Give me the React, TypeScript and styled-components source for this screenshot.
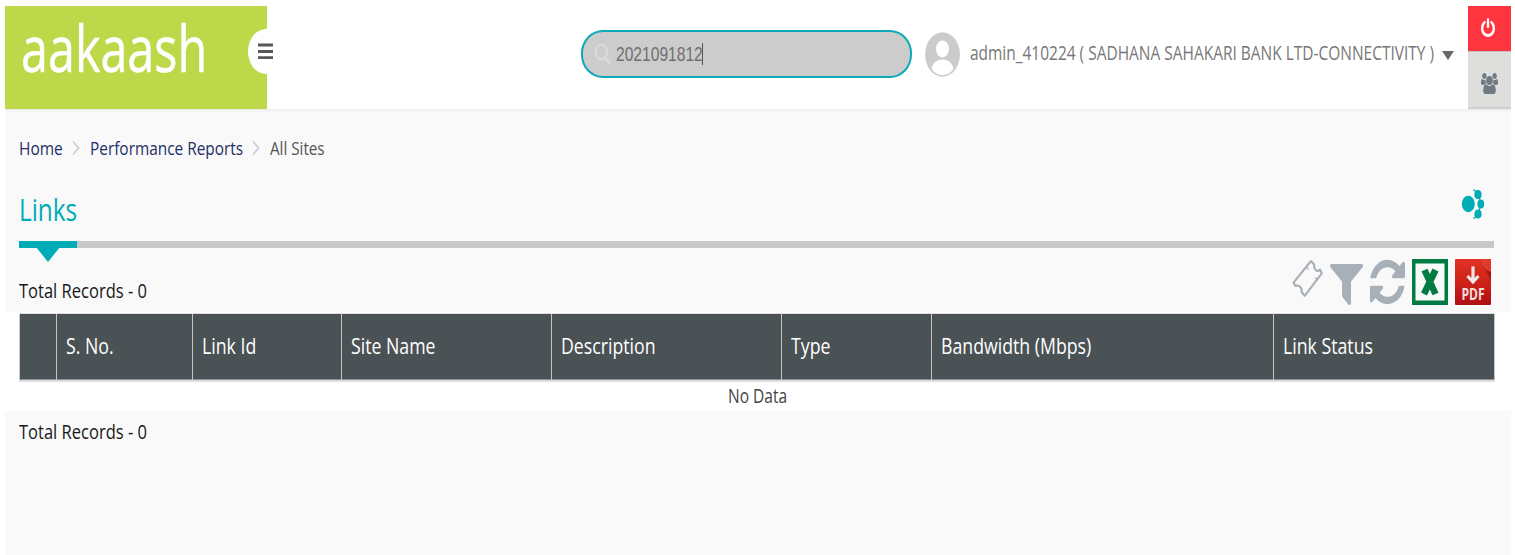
import React from 'react';
import styled, { createGlobalStyle } from 'styled-components';

const GlobalStyle = createGlobalStyle`
  * { box-sizing: border-box; }
  body {
    margin: 0;
    background: #fff;
    font-family: 'Open Sans', 'Noto Sans', sans-serif;
    overflow: hidden;
  }
`;

/* Condensed text run: glyphs are narrowed while the run keeps its drawn width. */
const Condensed = styled.span<{ $scale: number; $width?: number }>`
  display: block;
  flex: none;
  width: ${p => (p.$width ? `${p.$width}px` : 'auto')};
  white-space: nowrap;
  transform: scaleX(${p => p.$scale});
  transform-origin: 0 50%;
`;

const Page = styled.div`
  display: flex;
  flex-direction: column;
  height: 555px;
  padding: 6px 4px 0 5px;
`;

const Header = styled.header`
  display: flex;
  height: 103px;
  flex: none;
  background: #fff;
`;

const Brand = styled.div`
  width: 262px;
  height: 103px;
  padding-left: 16px;
  background: #bdd849;
`;

const BrandName = styled(Condensed)`
  height: 84px;
  line-height: 84px;
  font-size: 64px;
  color: #fff;
  -webkit-text-stroke: 0.5px #fff;
`;

/* White disc straddling the brand edge; only its left half shows against the green. */
const MenuButton = styled.div`
  display: flex;
  align-items: center;
  flex: none;
  width: 36px;
  height: 45px;
  margin: 23px 0 0 -19px;
  padding-left: 10px;
  border-radius: 50%;
  background: #fff;
`;

const SearchBox = styled.div`
  display: flex;
  align-items: center;
  width: 331px;
  height: 48px;
  margin: 24px 0 0 297px;
  padding-left: 11px;
  border: 2px solid #0caab8;
  border-radius: 22px / 23px;
  background: #ccc;
`;

const SearchText = styled(Condensed)`
  margin-left: 4px;
  font: 20px/24px 'Liberation Sans', Arial, sans-serif;
  color: #707070;
`;

const Caret = styled.i`
  width: 1px;
  height: 22px;
  background: #555;
`;

const Account = styled.div`
  display: flex;
  align-items: center;
  height: 96px;
  margin-left: 13px;
`;

const AccountName = styled(Condensed)`
  margin: -2px 0 0 10px;
  font-size: 19.5px;
  line-height: 28px;
  color: #777;
`;

const DropArrow = styled.i`
  margin-left: 7px;
  margin-top: 3px;
  border: solid transparent;
  border-width: 9px 6.5px 0;
  border-top-color: #686868;
`;

const SideButtons = styled.div`
  width: 43px;
  margin-left: auto;
`;

const SideButton = styled.div<{ $tone: 'danger' | 'plain' }>`
  display: flex;
  justify-content: center;
  height: ${p => (p.$tone === 'danger' ? 45 : 58)}px;
  padding-top: ${p => (p.$tone === 'danger' ? 12 : 22)}px;
  padding-right: ${p => (p.$tone === 'danger' ? 4 : 0)}px;
  background: ${p => (p.$tone === 'danger' ? '#ff3640' : '#dededc')};
  border-bottom: ${p => (p.$tone === 'danger' ? '0' : '2px solid #d0d0cf')};
  box-shadow: ${p => (p.$tone === 'danger' ? 'none' : 'inset 0 1px 0 #c8bfbe')};
`;

const Content = styled.main`
  flex: 1;
  background: #f9f9f9;
  border-top: 1px solid #ececec;
  box-shadow: inset 0 2px 0 #f5f5f5;
`;

const Breadcrumb = styled.nav`
  display: flex;
  align-items: center;
  height: 77px;
  padding: 0 0 1px 13.5px;
`;

const Crumb = styled(Condensed)<{ $current?: boolean }>`
  font-size: 19px;
  line-height: 28px;
  color: ${p => (p.$current ? '#555' : '#1d2f66')};
`;

const Separator = styled.svg`
  width: 8px;
  height: 16px;
  margin: 0 10px;
`;

const TitleRow = styled.div`
  display: flex;
  justify-content: space-between;
  height: 54px;
  padding: 0 26px 0 13.5px;
`;

const Title = styled(Condensed)`
  font-size: 31px;
  line-height: 45px;
  color: #00acb5;
`;

const Rule = styled.div`
  height: 7px;
  margin: 0 17px 0 14px;
  background: #c8c8c8;
`;

const ActiveMark = styled.div`
  display: flex;
  justify-content: center;
  width: 58px;
  height: 7px;
  background: #00acb5;
`;

const Pointer = styled.i`
  width: 0;
  height: 0;
  margin-top: 6px;
  border: solid transparent;
  border-width: 15px 12px 0;
  border-top-color: #00acb5;
`;

const Toolbar = styled.div`
  display: flex;
  justify-content: space-between;
  height: 64px;
  padding: 11px 20px 0 14px;
`;

const Total = styled(Condensed)`
  font-size: 20px;
  line-height: 30px;
  color: #181818;
`;

const ToolbarTotal = styled(Total)`
  margin-top: 17px;
`;

const Actions = styled.div`
  display: flex;
  gap: 7px;
`;

const TableBand = styled.section`
  height: 99px;
  padding: 1px 16px 0 14px;
  background: #fff;
`;

const HeadRow = styled.div`
  display: grid;
  grid-template-columns: 37px 136px 149px 210px 230px 150px 342px 222px;
  height: 69px;
  background: #4a5255;
  border: solid #dedede;
  border-width: 1px 0 2px;
  box-shadow: inset 0 -1px 0 #8b9091;
`;

const HeadCell = styled.div`
  display: flex;
  align-items: center;
  height: 66px;
  padding-left: 9px;
  border-left: 1px solid #c4c6c7;
  &:last-child { border-right: 1px solid #c4c6c7; }
`;

const HeadText = styled(Condensed)`
  margin-top: -5px;
  font-size: 22px;
  line-height: 30px;
  color: #fff;
`;

const EmptyRow = styled.div`
  padding-left: 708.5px;
`;

const EmptyText = styled(Condensed)`
  font-size: 19.5px;
  line-height: 28px;
  color: #444;
`;

const Footer = styled.footer`
  padding: 6px 0 0 14px;
`;

const COLUMNS = ['', 'S. No.', 'Link Id', 'Site Name', 'Description', 'Type', 'Bandwidth (Mbps)', 'Link Status'];

const Chevron = () => (
  <Separator viewBox="0 0 8 16">
    <path d="M1 1.5 6.6 8 1 14.5" fill="none" stroke="#cfcfcf" strokeWidth="1.8" />
  </Separator>
);

const BurgerIcon = () => (
  <svg width="15" height="17" viewBox="0 0 15 17">
    <path d="M0 2h15M0 8.5h15M0 14.7h15" stroke="#585858" strokeWidth="2.8" />
  </svg>
);

const SearchIcon = () => (
  <svg width="18" height="22" viewBox="0 0 18 22">
    <ellipse cx="7.5" cy="9" rx="5.8" ry="7.4" fill="none" stroke="#dadada" strokeWidth="2.2" />
    <path d="m11.5 15 4 5" stroke="#dadada" strokeWidth="2.8" strokeLinecap="round" />
  </svg>
);

const AvatarIcon = () => (
  <svg width="35" height="45" viewBox="0 0 35 45">
    <ellipse cx="17.5" cy="22.5" rx="17.4" ry="22.2" fill="#cbcbcb" />
    <ellipse cx="17.5" cy="17" rx="6.5" ry="8.5" fill="#fff" />
    <path d="M6.5 36.5C8 30.5 12 27.5 17.5 27.5S27 30.5 28.5 36.5C26 41 22 43.2 17.5 43.2S9 41 6.5 36.5Z" fill="#fff" />
  </svg>
);

const PowerIcon = () => (
  <svg width="14" height="19" viewBox="128 0 1536 1664" preserveAspectRatio="none">
    <path fill="#fff" d="M1664 896q0 156-61 298t-164 245-245 164-298 61-298-61-245-164-164-245-61-298q0-182 80.5-343t226.5-270q43-32 95.5-25t83.5 50q32 42 24.5 94.5t-49.5 84.5q-98 74-151.5 181t-53.5 228q0 104 40.5 198.5t109.5 163.5 163.5 109.5 198.5 40.5 198.5-40.5 163.5-109.5 109.5-163.5 40.5-198.5q0-121-53.5-228t-151.5-181q-42-32-49.5-84.5t24.5-94.5q31-43 84-50t95 25q146 109 226.5 270t80.5 343zm-640-768v640q0 52-38 90t-90 38-90-38-38-90v-640q0-52 38-90t90-38 90 38 38 90z" />
  </svg>
);

const UsersIcon = () => (
  <svg width="17" height="21" viewBox="64 0 1920 1792" preserveAspectRatio="none">
    <path fill="#6f7a83" d="M657 896q-162 5-265 128h-134q-82 0-138-40.5t-56-118.5q0-353 124-353 6 0 43.5 21t97.5 42.5 119 21.5q67 0 133-23-5 37-5 66 0 139 81 256zm1071 637q0 120-73 189.5t-194 69.5h-874q-121 0-194-69.5t-73-189.5q0-53 3.5-103.5t14-109 26.5-108.5 43-97.5 62-81 85.5-53.5 111.5-20q10 0 43 21.5t73 48 107 48 135 21.5 135-21.5 107-48 73-48 43-21.5q61 0 111.5 20t85.5 53.5 62 81 43 97.5 26.5 108.5 14 109 3.5 103.5zm-1024-1277q0 106-75 181t-181 75-181-75-75-181 75-181 181-75 181 75 75 181zm704 384q0 159-112.5 271.5t-271.5 112.5-271.5-112.5-112.5-271.5 112.5-271.5 271.5-112.5 271.5 112.5 112.5 271.5zm576 225q0 78-56 118.5t-138 40.5h-134q-103-123-265-128 81-117 81-256 0-29-5-66 66 23 133 23 59 0 119-21.5t97.5-42.5 43.5-21q124 0 124 353zm-128-609q0 106-75 181t-181 75-181-75-75-181 75-181 181-75 181 75 75 181z" />
  </svg>
);

const NetworkSvg = styled.svg`
  width: 24px;
  height: 31px;
  margin-top: 2px;
`;

const NetworkIcon = () => (
  <NetworkSvg viewBox="0 0 24 31">
    <g fill="#00acb5">
      <ellipse cx="7.3" cy="15" rx="6.5" ry="8.2" />
      <ellipse cx="17" cy="5.5" rx="3.6" ry="4.5" />
      <ellipse cx="19.8" cy="15" rx="3.4" ry="4.6" />
      <ellipse cx="17" cy="25" rx="3.6" ry="4.5" />
    </g>
    <path d="M12.3.6C21 5 21.5 24 12.3 29.8" fill="none" stroke="#00acb5" strokeWidth="1.3" />
  </NetworkSvg>
);

const TicketIcon = () => (
  <svg width="31" height="46" viewBox="0 0 31 46">
    <path d="M19 2 22.2 5.5Q21.5 9.5 24.3 11.5Q26.5 12.7 28 10.7L29.8 14.3 12.6 36.9 9.6 32.8Q10 29 7.5 27.2Q5.3 26 3.5 27L1.5 23.6Z" fill="none" stroke="#a7afb8" strokeWidth="2.1" strokeLinejoin="round" />
    <path d="m15 8.5 1.5 2.2M23.3 18.3l1.6 2.4" stroke="#a7afb8" strokeWidth="1.3" />
  </svg>
);

const FilterSvg = styled.svg`
  width: 33px;
  height: 41px;
  margin-top: 5px;
`;

const FilterIcon = () => (
  <FilterSvg viewBox="0 0 1408 1408" preserveAspectRatio="none">
    <path fill="#a7afb8" d="M1403 39q17 41-14 70l-493 493v742q0 42-39 59-13 5-25 5-27 0-45-19l-256-256q-19-19-19-45v-486l-493-493q-31-29-14-70 17-39 59-39h1280q42 0 59 39z" />
  </FilterSvg>
);

const RefreshIcon = () => (
  <svg width="35" height="46" viewBox="0 -30 1536 1596" preserveAspectRatio="none">
    <path fill="#a7afb8" d="M1511 928q0 5-1 7-64 268-268 434.5t-478 166.5q-146 0-282.5-55t-243.5-157l-129 129q-19 19-45 19t-45-19-19-45v-448q0-26 19-45t45-19h448q26 0 45 19t19 45-19 45l-137 137q71 66 161 102t187 36q134 0 250-65t186-179q11-17 53-117 8-23 30-23h192q13 0 22.5 9.5t9.5 22.5zm25-800v448q0 26-19 45t-45 19h-448q-26 0-45-19t-19-45 19-45l138-138q-148-137-349-137-134 0-250 65t-186 179q-11 17-53 117-8 23-30 23h-199q-13 0-22.5-9.5t-9.5-22.5v-7q65-268 270-434.5t480-166.5q146 0 284 55.5t245 156.5l130-129q19-19 45-19t45 19 19 45z" />
  </svg>
);

const ExcelIcon = () => (
  <svg width="36" height="46" viewBox="0 0 36 46">
    <path fill="#007b43" d="M0 0h36v46H0z" />
    <path fill="#f7faf8" d="M3.5 4.5h29v37h-29z" />
    <path d="M12.5 11 23.5 35M23.5 11 12 35" stroke="#007b43" strokeWidth="6.6" />
  </svg>
);

const PdfText = styled.text`
  font: 700 15.5px 'Open Sans', sans-serif;
  fill: #f3dedb;
`;

const PdfIcon = () => (
  <svg width="36" height="46" viewBox="0 0 36 46">
    <defs>
      <linearGradient id="pdfFill" x1="0" y1="0" x2="0" y2="1">
        <stop offset="0" stopColor="#e13324" />
        <stop offset="0.55" stopColor="#cc2018" />
        <stop offset="1" stopColor="#ad1015" />
      </linearGradient>
    </defs>
    <rect width="36" height="46" rx="1" fill="url(#pdfFill)" />
    <path d="M24 0Q27 11 36 13V22Q31 10 24 0Z" fill="#a31412" />
    <path d="M24 0H36V13Q27 10 24 0Z" fill="#df3a2a" />
    <path d="M18 7.5V23M12.5 17 18 23 23.5 17" fill="none" stroke="#efe9e8" strokeWidth="3.2" />
    <PdfText transform="translate(6.5 40.5) scale(0.78 1)">PDF</PdfText>
  </svg>
);

export default function App() {
  return (
    <>
      <GlobalStyle />
      <Page>
        <Header>
          <Brand>
            <BrandName $scale={0.758} $width={191}>aakaash</BrandName>
          </Brand>
          <MenuButton><BurgerIcon /></MenuButton>
          <SearchBox>
            <SearchIcon />
            <SearchText $scale={0.78} $width={86}>2021091812</SearchText>
            <Caret />
          </SearchBox>
          <Account>
            <AvatarIcon />
            <AccountName $scale={0.793} $width={465}>
              admin_410224 ( SADHANA SAHAKARI BANK LTD-CONNECTIVITY )
            </AccountName>
            <DropArrow />
          </Account>
          <SideButtons>
            <SideButton $tone="danger"><PowerIcon /></SideButton>
            <SideButton $tone="plain"><UsersIcon /></SideButton>
          </SideButtons>
        </Header>
        <Content>
          <Breadcrumb>
            <Crumb $scale={0.815} $width={43}>Home</Crumb>
            <Chevron />
            <Crumb $scale={0.81} $width={152}>Performance Reports</Crumb>
            <Chevron />
            <Crumb $scale={0.8} $width={56} $current>All Sites</Crumb>
          </Breadcrumb>
          <TitleRow>
            <Title $scale={0.785} $width={60}>Links</Title>
            <NetworkIcon />
          </TitleRow>
          <Rule>
            <ActiveMark><Pointer /></ActiveMark>
          </Rule>
          <Toolbar>
            <ToolbarTotal $scale={0.826} $width={130}>Total Records - 0</ToolbarTotal>
            <Actions>
              <TicketIcon />
              <FilterIcon />
              <RefreshIcon />
              <ExcelIcon />
              <PdfIcon />
            </Actions>
          </Toolbar>
          <TableBand>
            <HeadRow>
              {COLUMNS.map((label, i) => (
                <HeadCell key={i}>
                  {label && <HeadText $scale={0.805}>{label}</HeadText>}
                </HeadCell>
              ))}
            </HeadRow>
            <EmptyRow>
              <EmptyText $scale={0.795} $width={60}>No Data</EmptyText>
            </EmptyRow>
          </TableBand>
          <Footer>
            <Total $scale={0.826} $width={130}>Total Records - 0</Total>
          </Footer>
        </Content>
      </Page>
    </>
  );
}
